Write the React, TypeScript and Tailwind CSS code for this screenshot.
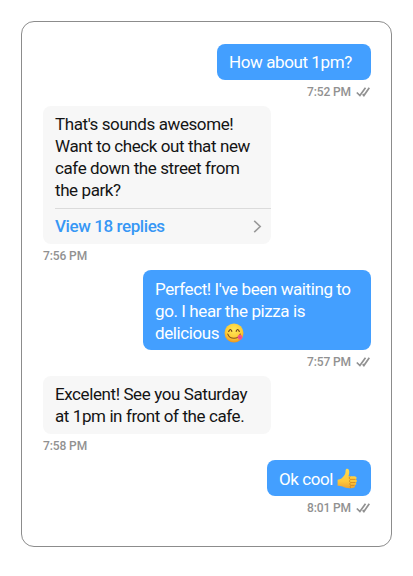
import type { ReactNode } from 'react';

function Checks() {
  return (
    <svg width="15" height="10" viewBox="0 0 15 10" fill="none" stroke="#919191" strokeWidth="1.7">
      <path d="M.8 5.5 3.9 8.5 9.5.7M6.7 7.1 7.9 8.5 13.3.7" />
    </svg>
  );
}

function YumFace() {
  return (
    <svg className="ml-[5px] inline-block align-[-4px]" width="20" height="20" viewBox="0 0 20 20">
      <defs>
        <radialGradient id="face" cx=".5" cy=".35" r=".65">
          <stop offset="0" stopColor="#ffe95a" />
          <stop offset=".65" stopColor="#fdcc36" />
          <stop offset="1" stopColor="#ed9321" />
        </radialGradient>
      </defs>
      <circle cx="10" cy="10" r="9.5" fill="url(#face)" />
      <path d="M3.8 11.1C5 14.3 7 15.3 10 15.3S15 14.3 16.2 11.1" fill="none" stroke="#87501e" strokeWidth="1.1" strokeLinecap="round" />
      <path d="M4.7 8.5Q6.2 4.6 7.8 8.3M12.2 8.3Q13.8 4.6 15.3 8.5" fill="none" stroke="#70401c" strokeWidth="1.2" strokeLinecap="round" />
      <path d="M13.6 13.6C14.5 11.5 16.5 11.2 17.7 12.6C19 14.2 18.3 16.4 16.5 16.7C14.8 17 13.5 15.4 13.6 13.6Z" fill="#f6518f" />
      <path d="m14.7 13.2 1.8 1.8" stroke="#d9377a" strokeWidth=".6" />
    </svg>
  );
}

function ThumbsUp() {
  return (
    <svg className="ml-[4px] inline-block align-[-4px]" width="21" height="21" viewBox="0 0 21 21">
      <defs>
        <linearGradient id="thumb" x1="0" y1="0" x2="0" y2="1">
          <stop offset="0" stopColor="#ffdb50" />
          <stop offset=".65" stopColor="#ffc83a" />
          <stop offset="1" stopColor="#eda332" />
        </linearGradient>
      </defs>
      <path d="M.6 11.8C3.8 11.5 5.6 9.8 7.2 7.5C8.5 5.6 8.5 4.4 8.6 2.3C8.7.3 11 .1 11.8 1.8C12.7 3.8 12.2 6.2 11.4 8.3L17.7 8.2C19.8 8.3 20.2 10.5 18.9 11.4C20.5 12.3 20.1 14.1 18.7 14.6C19.8 15.7 19.2 17.2 17.8 17.4C18.4 18.9 17.4 19.8 15.8 20C11.7 20.5 8.4 20.2 5.6 18.6C4 17.7 2.3 18 .6 17.7Z" fill="url(#thumb)" />
      <path d="M18.6 11.4H13.6C11.7 11.2 11.7 8.8 13.5 8.3M18.4 14.5H13.7C12.1 14.1 12.2 12.2 13.5 11.5M17.5 17.4H13.9C12.5 17 12.5 15.3 13.6 14.7M13.8 17.5C12.8 18 12.9 19.5 14 20" fill="none" stroke="#cf861f" strokeWidth=".8" />
    </svg>
  );
}

function Sent({ size, time, children }: { size: string; time: string; children: ReactNode }) {
  return (
    <div className="flex flex-col items-end">
      <div className={`${size} rounded-lg bg-[#439fff] px-3 text-white`}>{children}</div>
      <div className="flex h-[26px] items-center gap-[5px] pb-[2px] text-xs font-medium tracking-[-0.1px] text-[#919191]">
        <span>{time}</span>
        <Checks />
      </div>
    </div>
  );
}

function Received({ time, children, replies }: { time: string; children: ReactNode; replies?: string }) {
  return (
    <div className="flex flex-col items-start">
      <div className="w-[228px] rounded-lg bg-[#f7f7f7] text-[#141414]">
        <div className="px-3 py-[7px]">{children}</div>
        {replies && (
          <div className="ml-3 flex h-9 items-center justify-between border-t border-[#dbdbdb] pr-[9px] pb-px font-medium text-[#3797f5]">
            <span>{replies}</span>
            <svg width="9" height="13" viewBox="0 0 9 13" fill="none" stroke="#999" strokeWidth="1.6">
              <path d="m1.2.8 6 5.7-6 5.7" />
            </svg>
          </div>
        )}
      </div>
      <div className="flex h-[26px] items-center pb-[2px] text-xs font-medium tracking-[-0.1px] text-[#919191]">{time}</div>
    </div>
  );
}

export default function App() {
  return (
    <main className="h-[576px] w-[413px] bg-white pt-[21px] pl-[21px] font-['Roboto',sans-serif]">
      <section className="h-[526px] w-[371px] rounded-[13px] border border-[#8c8c8c] pt-[22px] pr-5 pl-[21px] text-[17px] leading-[22px] tracking-[-0.41px] whitespace-nowrap">
        <Sent size="w-[154px] py-[7px]" time="7:52 PM">How about 1pm?</Sent>
        <Received time="7:56 PM" replies="View 18 replies">
          That's sounds awesome!<br />Want to check out that new<br />cafe down the street from<br />the park?
        </Received>
        <Sent size="w-[228px] pt-2 pb-1.5" time="7:57 PM">
          Perfect! I've been waiting to<br />go. I hear the pizza is<br />
          <div className="h-[22px]">delicious<YumFace /></div>
        </Sent>
        <Received time="7:58 PM">
          Excelent! See you Saturday<br />at 1pm in front of the cafe.
        </Received>
        <Sent size="w-[104px] pt-2 pb-1.5" time="8:01 PM">
          <div className="h-[22px]">Ok cool<ThumbsUp /></div>
        </Sent>
      </section>
    </main>
  );
}
